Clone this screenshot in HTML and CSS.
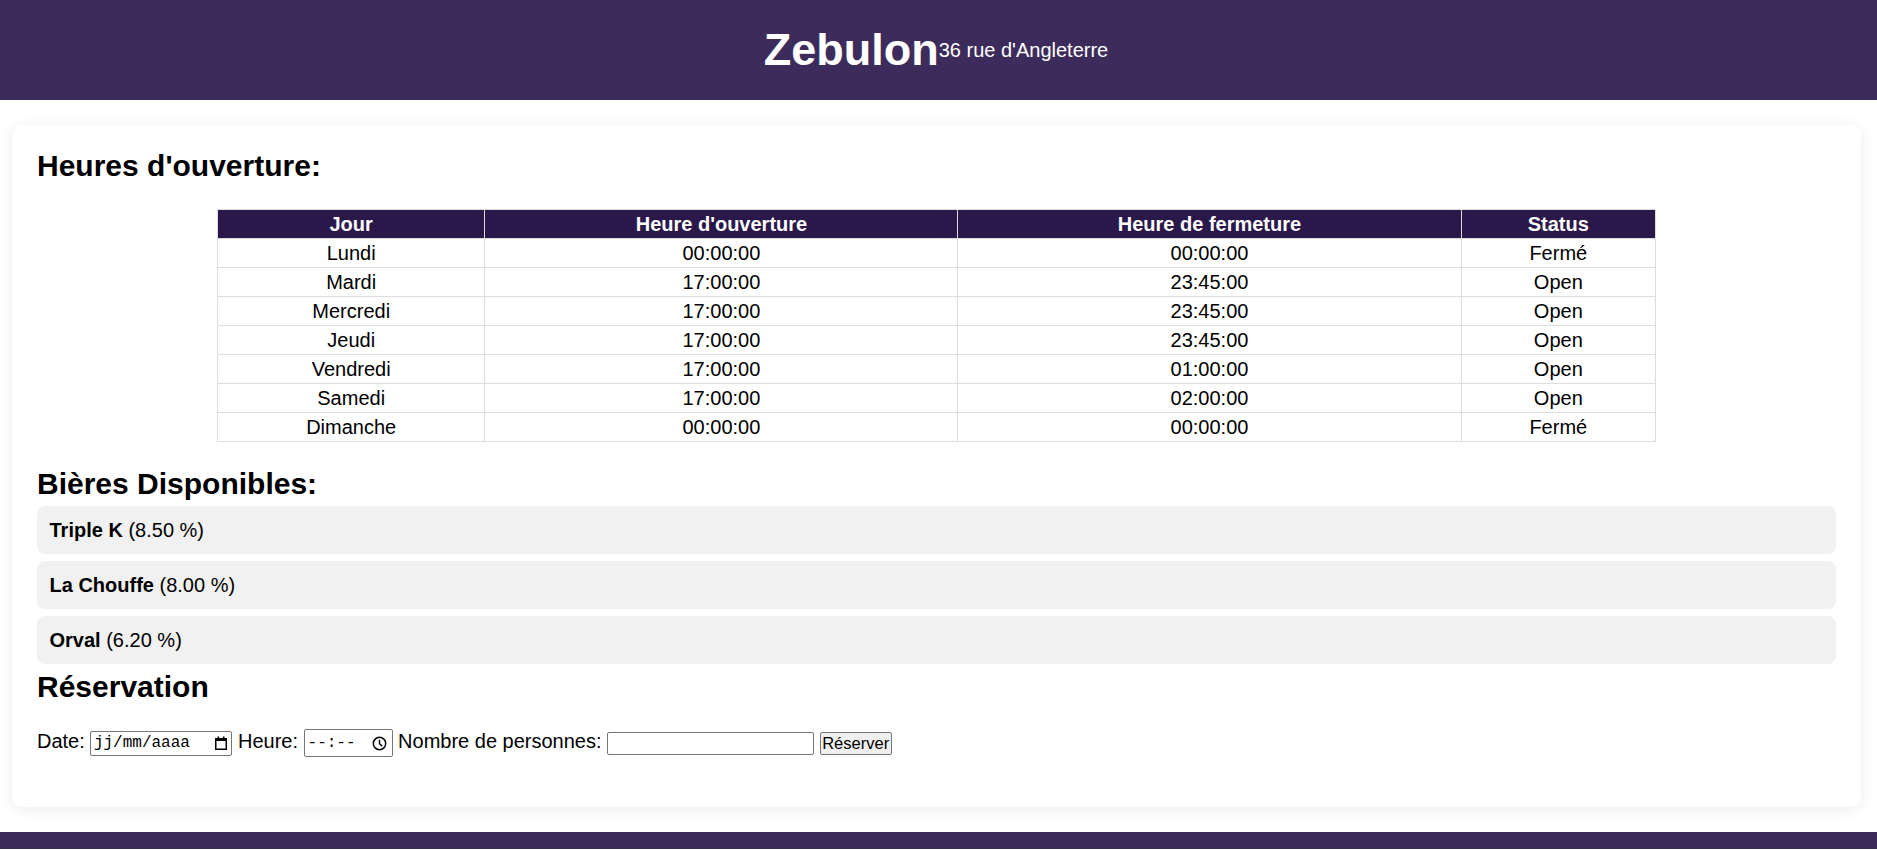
FILE: index.html
```html
<!DOCTYPE html>
<html lang="fr">
<head>
<meta charset="utf-8">
<title>Zebulon</title>
<link rel="stylesheet" href="styles.css">
</head>
<body>
<header class="site-header">
  <h1 class="site-title">Zebulon</h1>
  <span class="site-address">36 rue d'Angleterre</span>
</header>

<main class="card">
  <h2 class="section-title">Heures d'ouverture:</h2>
  <table class="hours">
    <thead>
      <tr><th>Jour</th><th>Heure d'ouverture</th><th>Heure de fermeture</th><th>Status</th></tr>
    </thead>
    <tbody>
      <tr><td>Lundi</td><td>00:00:00</td><td>00:00:00</td><td>Fermé</td></tr>
      <tr><td>Mardi</td><td>17:00:00</td><td>23:45:00</td><td>Open</td></tr>
      <tr><td>Mercredi</td><td>17:00:00</td><td>23:45:00</td><td>Open</td></tr>
      <tr><td>Jeudi</td><td>17:00:00</td><td>23:45:00</td><td>Open</td></tr>
      <tr><td>Vendredi</td><td>17:00:00</td><td>01:00:00</td><td>Open</td></tr>
      <tr><td>Samedi</td><td>17:00:00</td><td>02:00:00</td><td>Open</td></tr>
      <tr><td>Dimanche</td><td>00:00:00</td><td>00:00:00</td><td>Fermé</td></tr>
    </tbody>
  </table>

  <h2 class="section-title">Bières Disponibles:</h2>
  <ul class="beers">
    <li class="beer"><strong>Triple K</strong> (8.50 %)</li>
    <li class="beer"><strong>La Chouffe</strong> (8.00 %)</li>
    <li class="beer"><strong>Orval</strong> (6.20 %)</li>
  </ul>

  <h2 class="section-title">Réservation</h2>
  <form class="resa">
    <label>Date:</label> <span class="field field-date"><span class="mask">jj/mm/aaaa</span><svg class="icon-cal" width="14" height="16" viewBox="0 0 14 16" aria-hidden="true"><rect x="1.75" y="3.75" width="10.5" height="10.5" fill="none" stroke="#000" stroke-width="1.5"/><rect x="1" y="3" width="12" height="3" fill="#000"/><rect x="3.5" y="1.5" width="1.5" height="2.5" fill="#000"/><rect x="9" y="1.5" width="1.5" height="2.5" fill="#000"/></svg></span> <label>Heure:</label> <span class="field field-time"><span class="mask">--:--</span><svg class="icon-clock" width="15" height="15" viewBox="0 0 15 15" aria-hidden="true"><circle cx="7.5" cy="7.5" r="6.2" fill="none" stroke="#000" stroke-width="1.5"/><path d="M7.5 3.8 V7.6 L10.2 10.3" fill="none" stroke="#000" stroke-width="1.5"/></svg></span> <label for="nb">Nombre de personnes:</label> <input id="nb" class="field-number" type="number"> <button type="button" class="btn">Réserver</button>
  </form>
</main>

<footer class="site-footer"></footer>
</body>
</html>
```

FILE: styles.css
```css
body {
  margin: 0;
  font-family: "Liberation Sans", Arial, sans-serif;
  color: #000;
  background: #fff;
}

.site-header {
  height: 100px;
  padding-right: 5px;
  background: #3d2b5c;
  color: #fff;
  display: flex;
  justify-content: center;
  align-items: center;
}

.site-title {
  margin: 0;
  font-size: 45px;
  font-weight: bold;
}

.site-address {
  font-size: 20px;
}

.card {
  display: block;
  margin: 25px 16px 25px 12px;
  padding: 24px 25px 25px;
  background: #fff;
  border-radius: 10px;
  box-shadow: 0 2px 15px rgba(0, 0, 0, 0.08);
}

.section-title {
  margin: 0;
  font-size: 30px;
  font-weight: bold;
}

.hours {
  width: 80%;
  margin: 26px auto 25px;
  border-collapse: collapse;
  font-size: 20px;
}

.hours th,
.hours td {
  border: 1px solid #ddd;
  padding: 2.5px 7.5px;
  text-align: center;
  line-height: 23px;
}

.hours th {
  background: #2a184a;
  color: #fff;
  font-weight: bold;
}

.beers {
  list-style: none;
  margin: 5px 0 6px;
  padding: 0;
  display: flex;
  flex-direction: column;
  gap: 7px;
  font-size: 20px;
}

.beer {
  background: #f1f1f1;
  border-radius: 8px;
  padding: 12.5px;
  line-height: 23px;
}

.resa {
  margin: 25px 0;
  font-size: 20px;
  line-height: 23px;
}

.field {
  display: inline-flex;
  align-items: center;
  justify-content: space-between;
  box-sizing: border-box;
  border: 1px solid #767676;
  border-radius: 2px;
  vertical-align: middle;
  background: #fff;
  font-family: "Liberation Mono", "DejaVu Sans Mono", monospace;
  font-size: 16px;
  line-height: 18px;
}

.field-date {
  width: 142px;
  height: 25px;
  padding: 0 3px 0 2.5px;
}

.field-time {
  width: 89px;
  height: 28px;
  padding: 0 5px 0 3px;
}

.icon-cal,
.icon-clock {
  display: block;
  flex: none;
}

.field-number {
  box-sizing: border-box;
  width: 207px;
  height: 23px;
  border: 1px solid #767676;
  border-radius: 2px;
  padding: 0 2px;
  vertical-align: middle;
  font-family: "Liberation Sans", Arial, sans-serif;
  font-size: 16px;
}

.btn {
  box-sizing: border-box;
  width: 72px;
  height: 23px;
  padding: 0 1px;
  border: 1px solid #767676;
  border-radius: 2px;
  background: #efefef;
  color: #000;
  vertical-align: middle;
  font-family: "Liberation Sans", Arial, sans-serif;
  font-size: 16.5px;
}

.site-footer {
  height: 17px;
  background: #3d2b5c;
}
```
